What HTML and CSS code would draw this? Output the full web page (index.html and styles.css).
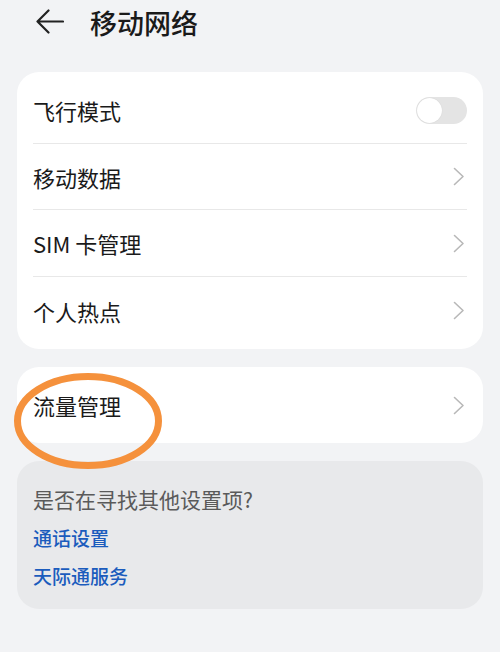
FILE: index.html
```html
<!DOCTYPE html>
<html lang="zh-CN">
<head>
<meta charset="utf-8">
<link rel="stylesheet" href="styles.css">
</head>
<body>
<div class="page">
  <header class="header">
    <svg class="back" width="28" height="26" viewBox="0 0 28 26">
      <path d="M27 12.5H1.5M12.5 1.5L1.5 12.5L12.5 23.5" fill="none" stroke="#222" stroke-width="2.2" stroke-linecap="round" stroke-linejoin="round"/>
    </svg>
    <h1 class="title">移动网络</h1>
  </header>

  <section class="card">
    <div class="row">
      <span class="label">飞行模式</span>
      <span class="toggle"><span class="knob"></span></span>
    </div>
    <div class="row">
      <span class="label">移动数据</span>
      <svg class="chev" width="12" height="19" viewBox="0 0 12 19"><path d="M1.5 1.5L10 9.5L1.5 17.5" fill="none" stroke="#b8b8b8" stroke-width="1.6" stroke-linecap="round" stroke-linejoin="round"/></svg>
    </div>
    <div class="row">
      <span class="label">SIM 卡管理</span>
      <svg class="chev" width="12" height="19" viewBox="0 0 12 19"><path d="M1.5 1.5L10 9.5L1.5 17.5" fill="none" stroke="#b8b8b8" stroke-width="1.6" stroke-linecap="round" stroke-linejoin="round"/></svg>
    </div>
    <div class="row">
      <span class="label">个人热点</span>
      <svg class="chev" width="12" height="19" viewBox="0 0 12 19"><path d="M1.5 1.5L10 9.5L1.5 17.5" fill="none" stroke="#b8b8b8" stroke-width="1.6" stroke-linecap="round" stroke-linejoin="round"/></svg>
    </div>
  </section>

  <section class="card card-single">
    <div class="row row-single">
      <span class="label">流量管理</span>
      <svg class="chev" width="12" height="19" viewBox="0 0 12 19"><path d="M1.5 1.5L10 9.5L1.5 17.5" fill="none" stroke="#b8b8b8" stroke-width="1.6" stroke-linecap="round" stroke-linejoin="round"/></svg>
    </div>
    <svg class="circle" width="160" height="108" viewBox="0 0 160 108">
      <ellipse cx="80" cy="54" rx="70.5" ry="44.5" fill="none" stroke="#f5913c" stroke-width="7"/>
    </svg>
  </section>

  <section class="more">
    <p class="question">是否在寻找其他设置项?</p>
    <a class="link">通话设置</a>
    <a class="link">天际通服务</a>
  </section>
</div>
</body>
</html>
```

FILE: styles.css
```css
* { box-sizing: border-box; }
html, body {
  margin: 0;
  padding: 0;
}
body {
  background: #f2f3f5;
  font-family: "Noto Sans CJK SC", "Noto Sans", sans-serif;
  color: #1a1a1a;
  width: 500px;
  height: 652px;
  overflow: hidden;
}
.page {
  display: flex;
  flex-direction: column;
}
.header {
  height: 45px;
  display: flex;
  align-items: center;
  padding-left: 36px;
}
.back {
  display: block;
  margin-top: -1px;
}
.title {
  margin: 0 0 0 26px;
  font-size: 27px;
  font-weight: 500;
  line-height: 45px;
  color: #1a1a1a;
}
.card {
  margin: 27px 17px 0;
  background: #ffffff;
  border-radius: 22px;
  padding: 5px 16px 6px;
  position: relative;
}
.row {
  height: 66.6px;
  display: flex;
  align-items: center;
  justify-content: space-between;
  border-bottom: 1px solid #e8e8e8;
  padding-top: 1px;
}
.row:last-child { border-bottom: none; }
.label {
  font-size: 22px;
  line-height: 1;
  color: #1a1a1a;
}
.chev {
  display: block;
  margin-right: 2px;
}
.toggle {
  width: 51px;
  height: 27px;
  border-radius: 14px;
  background: #e4e4e4;
  position: relative;
  display: block;
}
.knob {
  position: absolute;
  left: 1px;
  top: 1px;
  width: 25px;
  height: 25px;
  border-radius: 50%;
  background: #ffffff;
  box-shadow: 0 0 1px rgba(0,0,0,0.15);
}
.card-single {
  margin-top: 18px;
  padding: 0 16px;
}
.row-single {
  height: 76px;
  border-bottom: none;
  padding-top: 0;
}
.circle {
  position: absolute;
  left: -9px;
  top: 0px;
  pointer-events: none;
}
.more {
  margin: 18px 17px 0;
  background: #e8e9eb;
  border-radius: 22px;
  padding: 24px 16px 22px;
  display: flex;
  flex-direction: column;
  height: 148px;
}
.question {
  margin: 0;
  font-size: 21px;
  line-height: 28px;
  color: #5a5a5a;
}
.link {
  font-size: 19px;
  line-height: 26px;
  color: #1b5cbd;
  font-weight: 500;
  margin-top: 12px;
}
```
